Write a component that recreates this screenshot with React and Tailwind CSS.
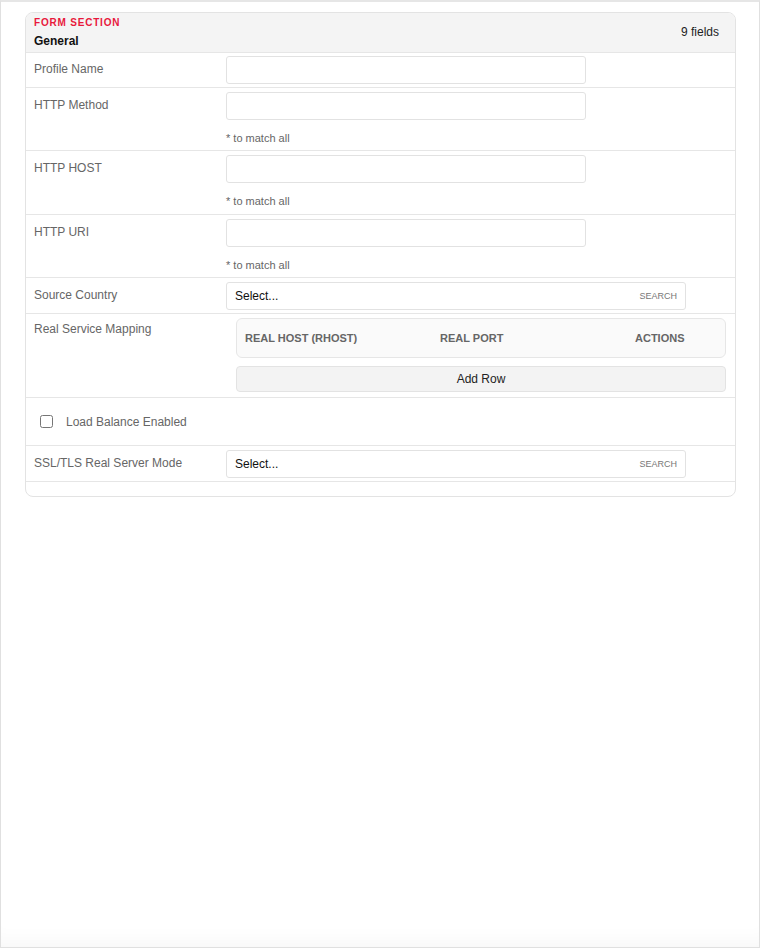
import React from 'react';

const fields = [
  { label: 'Profile Name', kind: 'input' },
  { label: 'HTTP Method', kind: 'input', hint: '* to match all' },
  { label: 'HTTP HOST', kind: 'input', hint: '* to match all' },
  { label: 'HTTP URI', kind: 'input', hint: '* to match all' },
  { label: 'Source Country', kind: 'select' },
  { label: 'Real Service Mapping', kind: 'mapping' },
  { label: 'Load Balance Enabled', kind: 'checkbox' },
  { label: 'SSL/TLS Real Server Mode', kind: 'select' },
];

function TextField({ hint }) {
  return (
    <div className="flex flex-col">
      <input
        type="text"
        className="h-[28px] w-[360px] rounded-[3px] border border-[#e2e2e2] bg-white px-2 text-[12px] outline-none"
      />
      {hint && (
        <div className="mt-[11px] mb-[2.34px] text-[11px] leading-[14px] text-[#666]">{hint}</div>
      )}
    </div>
  );
}

function SelectField() {
  return (
    <div className="flex h-[28px] w-[460px] items-center justify-between rounded-[3px] border border-[#e2e2e2] bg-white pl-2 pr-2">
      <span className="text-[12px] text-[#111]">Select...</span>
      <span className="pt-px text-[9px] text-[#777]">SEARCH</span>
    </div>
  );
}

function MappingField() {
  return (
    <div className="ml-[10px] mb-[2px] flex w-[490px] flex-col gap-2">
      <div className="grid h-[40px] grid-cols-[195px_195px_1fr] items-center rounded-md border border-[#e6e6e6] bg-[#fafafa] px-2 text-[11px] font-bold text-[#666]">
        <span>REAL HOST (RHOST)</span>
        <span>REAL PORT</span>
        <span>ACTIONS</span>
      </div>
      <button
        type="button"
        className="h-[26px] rounded-[4px] border border-[#e3e3e3] bg-[#f3f3f3] text-[12px] text-[#222]"
      >
        Add Row
      </button>
    </div>
  );
}

function FieldRow({ field, first }) {
  if (field.kind === 'checkbox') {
    return (
      <div className="flex items-center border-b border-[#e6e6e6] px-2 pt-4 pb-[15px]">
        <input type="checkbox" className="m-0 ml-[6px] h-[13px] w-[13px]" />
        <span className="ml-[13px] text-[12px] leading-4 text-[#666]">{field.label}</span>
      </div>
    );
  }

  return (
    <div className={`flex border-b border-[#e6e6e6] px-2 pb-[3px] ${first ? 'pt-[3px]' : 'pt-1'}`}>
      <div
        className={`w-[192px] shrink-0 text-[12px] leading-4 text-[#666] ${
          field.kind === 'mapping' ? 'pt-[3px]' : 'pt-[5px]'
        }`}
      >
        {field.label}
      </div>
      {field.kind === 'input' && <TextField hint={field.hint} />}
      {field.kind === 'select' && <SelectField />}
      {field.kind === 'mapping' && <MappingField />}
    </div>
  );
}

export default function App() {
  return (
    <div
      className="flex h-[948px] flex-col border-x border-b border-t-2 border-[#e0e0e0] border-t-[#e6e6e6] bg-white shadow-[inset_0_-22px_22px_-18px_rgba(0,0,0,0.04)]"
      style={{ fontFamily: '"Liberation Sans", Arial, sans-serif' }}
    >
      <div className="ml-6 mt-[10px] w-[711px] overflow-hidden rounded-lg border border-[#e3e3e3] bg-white">
        <div className="flex items-center justify-between border-b border-[#e6e6e6] bg-[#f4f4f4] pt-[3px] pb-[3px] pl-2 pr-4">
          <div className="flex flex-col">
            <span className="text-[10px] font-bold leading-[13px] tracking-[0.8px] text-[#e8193c]">FORM SECTION</span>
            <span className="mt-[4px] text-[12px] font-bold leading-4 text-[#111]">General</span>
          </div>
          <span className="mb-[2px] text-[12px] text-[#222]">9 fields</span>
        </div>
        {fields.map((field, i) => (
          <FieldRow key={field.label} field={field} first={i === 0} />
        ))}
        <div className="h-[14px]" />
      </div>
    </div>
  );
}
